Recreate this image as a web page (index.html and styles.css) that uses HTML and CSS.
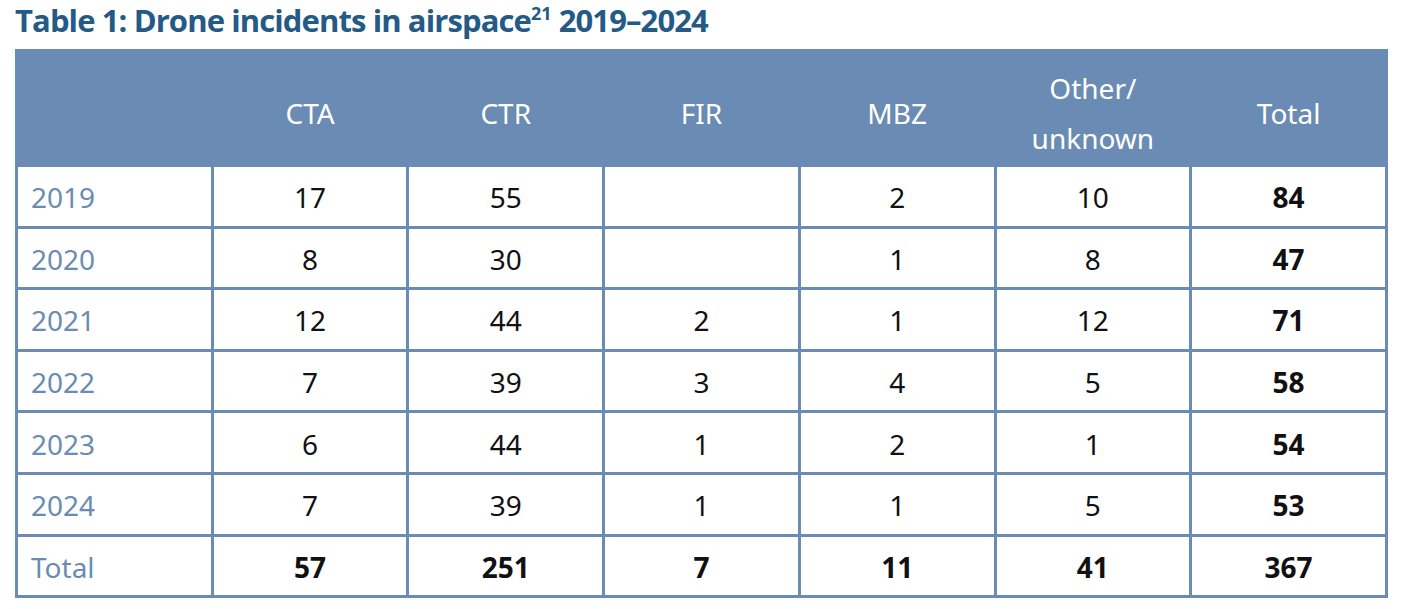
FILE: index.html
```html
<!DOCTYPE html>
<html lang="en">
<head>
<meta charset="utf-8">
<title>Table 1: Drone incidents in airspace 2019–2024</title>
<link rel="stylesheet" href="styles.css">
</head>
<body>
<main class="page">
  <h1 class="title">Table 1: Drone incidents in airspace<sup>21</sup> 2019–2024</h1>
  <table class="data">
    <colgroup>
      <col class="c-year"><col><col><col><col><col><col>
    </colgroup>
    <thead>
      <tr>
        <th></th>
        <th>CTA</th>
        <th>CTR</th>
        <th>FIR</th>
        <th>MBZ</th>
        <th>Other/<br>unknown</th>
        <th>Total</th>
      </tr>
    </thead>
    <tbody>
      <tr><td class="year">2019</td><td>17</td><td>55</td><td></td><td>2</td><td>10</td><td class="b">84</td></tr>
      <tr><td class="year">2020</td><td>8</td><td>30</td><td></td><td>1</td><td>8</td><td class="b">47</td></tr>
      <tr><td class="year">2021</td><td>12</td><td>44</td><td>2</td><td>1</td><td>12</td><td class="b">71</td></tr>
      <tr><td class="year">2022</td><td>7</td><td>39</td><td>3</td><td>4</td><td>5</td><td class="b">58</td></tr>
      <tr><td class="year">2023</td><td>6</td><td>44</td><td>1</td><td>2</td><td>1</td><td class="b">54</td></tr>
      <tr><td class="year">2024</td><td>7</td><td>39</td><td>1</td><td>1</td><td>5</td><td class="b">53</td></tr>
      <tr class="total"><td class="year">Total</td><td>57</td><td>251</td><td>7</td><td>11</td><td>41</td><td>367</td></tr>
    </tbody>
  </table>
</main>
</body>
</html>
```

FILE: styles.css
```css
html, body {
  margin: 0;
  padding: 0;
  background: #ffffff;
}

.page {
  padding: 1px 0 0 15px;
  font-family: "Noto Sans", "Open Sans", sans-serif;
}

.title {
  margin: 0 0 10px 0;
  font-family: "Open Sans", "Noto Sans", sans-serif;
  font-weight: 700;
  font-size: 31px;
  line-height: 38px;
  color: #245a86;
  letter-spacing: -0.9px;
}

.title sup {
  font-size: 18px;
  line-height: 0;
  vertical-align: 12px;
  letter-spacing: 0;
}

.data {
  border-collapse: collapse;
  table-layout: fixed;
  width: 1373px;
  font-size: 28px;
  color: #111111;
}

.data th,
.data td {
  border: 3px solid #6a8cb4;
  text-align: center;
  padding: 0;
}

.data thead th {
  background: #6a8cb4;
  color: #ffffff;
  font-weight: 400;
  height: 102px;
  line-height: 50px;
  padding-top: 10px;
  vertical-align: middle;
}

.data tbody td {
  height: 56.6px;
  padding-top: 2px;
  vertical-align: middle;
}

.data tbody td.year {
  text-align: left;
  padding-left: 13px;
  color: #6a8cb4;
}

.data .b,
.data .total td:not(.year) {
  font-weight: 700;
}
```
